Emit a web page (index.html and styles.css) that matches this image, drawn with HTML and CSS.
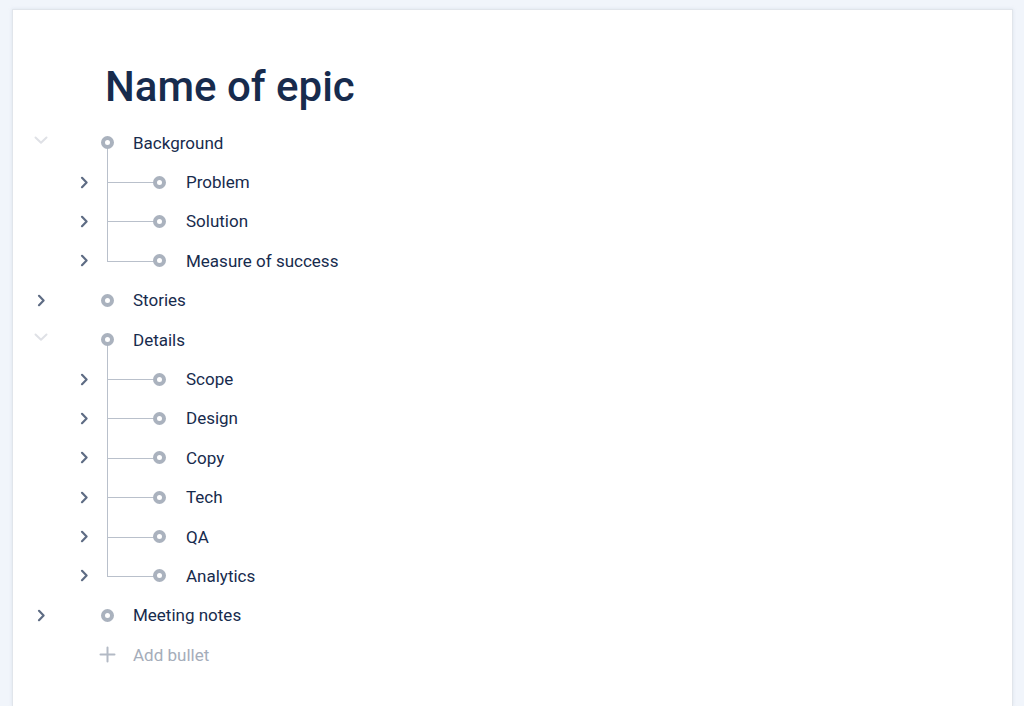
FILE: index.html
```html
<!DOCTYPE html>
<html>
<head>
<meta charset="utf-8">
<link rel="stylesheet" href="styles.css">
</head>
<body>
<div class="card">
  <h1 class="title">Name of epic</h1>
  <div class="tree">
    <div class="row top">
      <span class="chev"><svg width="14" height="9" viewBox="0 0 14 9"><path d="M1.5 1.5 L7 6.8 L12.5 1.5" fill="none" stroke="#dfe1e6" stroke-width="2" stroke-linecap="round" stroke-linejoin="round"/></svg></span>
      <span class="bullet"></span><span class="label">Background</span>
    </div>
    <div class="group">
      <div class="row child"><span class="chev"><svg width="9" height="13" viewBox="0 0 9 13"><path d="M2 1.8 L6.6 6.5 L2 11.2" fill="none" stroke="#5e6c84" stroke-width="2.2" stroke-linecap="round" stroke-linejoin="round"/></svg></span><span class="bullet"></span><span class="label">Problem</span></div>
      <div class="row child"><span class="chev"><svg width="9" height="13" viewBox="0 0 9 13"><path d="M2 1.8 L6.6 6.5 L2 11.2" fill="none" stroke="#5e6c84" stroke-width="2.2" stroke-linecap="round" stroke-linejoin="round"/></svg></span><span class="bullet"></span><span class="label">Solution</span></div>
      <div class="row child"><span class="chev"><svg width="9" height="13" viewBox="0 0 9 13"><path d="M2 1.8 L6.6 6.5 L2 11.2" fill="none" stroke="#5e6c84" stroke-width="2.2" stroke-linecap="round" stroke-linejoin="round"/></svg></span><span class="bullet"></span><span class="label">Measure of success</span></div>
    </div>
    <div class="row top">
      <span class="chev"><svg width="9" height="13" viewBox="0 0 9 13"><path d="M2 1.8 L6.6 6.5 L2 11.2" fill="none" stroke="#5e6c84" stroke-width="2.2" stroke-linecap="round" stroke-linejoin="round"/></svg></span>
      <span class="bullet"></span><span class="label">Stories</span>
    </div>
    <div class="row top">
      <span class="chev"><svg width="14" height="9" viewBox="0 0 14 9"><path d="M1.5 1.5 L7 6.8 L12.5 1.5" fill="none" stroke="#dfe1e6" stroke-width="2" stroke-linecap="round" stroke-linejoin="round"/></svg></span>
      <span class="bullet"></span><span class="label">Details</span>
    </div>
    <div class="group">
      <div class="row child"><span class="chev"><svg width="9" height="13" viewBox="0 0 9 13"><path d="M2 1.8 L6.6 6.5 L2 11.2" fill="none" stroke="#5e6c84" stroke-width="2.2" stroke-linecap="round" stroke-linejoin="round"/></svg></span><span class="bullet"></span><span class="label">Scope</span></div>
      <div class="row child"><span class="chev"><svg width="9" height="13" viewBox="0 0 9 13"><path d="M2 1.8 L6.6 6.5 L2 11.2" fill="none" stroke="#5e6c84" stroke-width="2.2" stroke-linecap="round" stroke-linejoin="round"/></svg></span><span class="bullet"></span><span class="label">Design</span></div>
      <div class="row child"><span class="chev"><svg width="9" height="13" viewBox="0 0 9 13"><path d="M2 1.8 L6.6 6.5 L2 11.2" fill="none" stroke="#5e6c84" stroke-width="2.2" stroke-linecap="round" stroke-linejoin="round"/></svg></span><span class="bullet"></span><span class="label">Copy</span></div>
      <div class="row child"><span class="chev"><svg width="9" height="13" viewBox="0 0 9 13"><path d="M2 1.8 L6.6 6.5 L2 11.2" fill="none" stroke="#5e6c84" stroke-width="2.2" stroke-linecap="round" stroke-linejoin="round"/></svg></span><span class="bullet"></span><span class="label">Tech</span></div>
      <div class="row child"><span class="chev"><svg width="9" height="13" viewBox="0 0 9 13"><path d="M2 1.8 L6.6 6.5 L2 11.2" fill="none" stroke="#5e6c84" stroke-width="2.2" stroke-linecap="round" stroke-linejoin="round"/></svg></span><span class="bullet"></span><span class="label">QA</span></div>
      <div class="row child"><span class="chev"><svg width="9" height="13" viewBox="0 0 9 13"><path d="M2 1.8 L6.6 6.5 L2 11.2" fill="none" stroke="#5e6c84" stroke-width="2.2" stroke-linecap="round" stroke-linejoin="round"/></svg></span><span class="bullet"></span><span class="label">Analytics</span></div>
    </div>
    <div class="row top">
      <span class="chev"><svg width="9" height="13" viewBox="0 0 9 13"><path d="M2 1.8 L6.6 6.5 L2 11.2" fill="none" stroke="#5e6c84" stroke-width="2.2" stroke-linecap="round" stroke-linejoin="round"/></svg></span>
      <span class="bullet"></span><span class="label">Meeting notes</span>
    </div>
    <div class="row top add">
      <span class="chev"></span>
      <span class="plus"><svg width="17" height="17" viewBox="0 0 17 17"><path d="M8.5 1.5 V15.5 M1.5 8.5 H15.5" stroke="#b3bac5" stroke-width="2" stroke-linecap="round"/></svg></span><span class="label">Add bullet</span>
    </div>
  </div>
</div>
</body>
</html>
```

FILE: styles.css
```css
html, body {
  margin: 0;
  padding: 0;
}
body {
  background: #f1f5fb;
  font-family: Roboto, "Liberation Sans", sans-serif;
  padding: 9px 11px 0 12px;
  height: 706px;
  box-sizing: border-box;
  overflow: hidden;
}
.card {
  background: #ffffff;
  border: 1px solid #e1e5eb;
  border-bottom: none;
  box-shadow: 0 0 3px rgba(200, 210, 225, 0.5);
  width: 1001px;
  height: 697px;
  box-sizing: border-box;
  padding-top: 53px;
}
.title {
  margin: 0 0 0 92px;
  font-size: 42px;
  line-height: 48px;
  font-weight: 500;
  color: #172b4d;
  letter-spacing: 0;
}
.tree {
  margin-top: 12px;
}
.row {
  position: relative;
  display: flex;
  align-items: center;
  height: 39.4px;
  color: #172b4d;
  font-size: 17px;
}
.chev {
  width: 20px;
  height: 20px;
  display: flex;
  align-items: center;
  justify-content: center;
}
.top .chev {
  margin-left: 18px;
}
.top .chev svg[height="9"] {
  margin-top: -4px;
}
.child .chev {
  margin-left: 61px;
}
.bullet {
  width: 13px;
  height: 13px;
  box-sizing: border-box;
  border: 4px solid #aab2be;
  border-radius: 50%;
  background: #fff;
  position: relative;
  z-index: 1;
}
.top .bullet {
  margin-left: 50px;
}
.child .bullet {
  margin-left: 59px;
}
.plus {
  margin-left: 48px;
  width: 17px;
  height: 17px;
  display: flex;
  align-items: center;
  justify-content: center;
}
.label {
  margin-left: 19px;
}
.child .label {
  margin-left: 20px;
}
.add .label {
  margin-left: 17px;
  color: #a5adba;
}
.group {
  position: relative;
}
.group::before {
  content: "";
  position: absolute;
  left: 94px;
  top: -14px;
  bottom: 19.7px;
  width: 1px;
  background: #b9c0cb;
}
.child::before {
  content: "";
  position: absolute;
  left: 94px;
  top: 50%;
  width: 48px;
  height: 1px;
  background: #b9c0cb;
}
```
